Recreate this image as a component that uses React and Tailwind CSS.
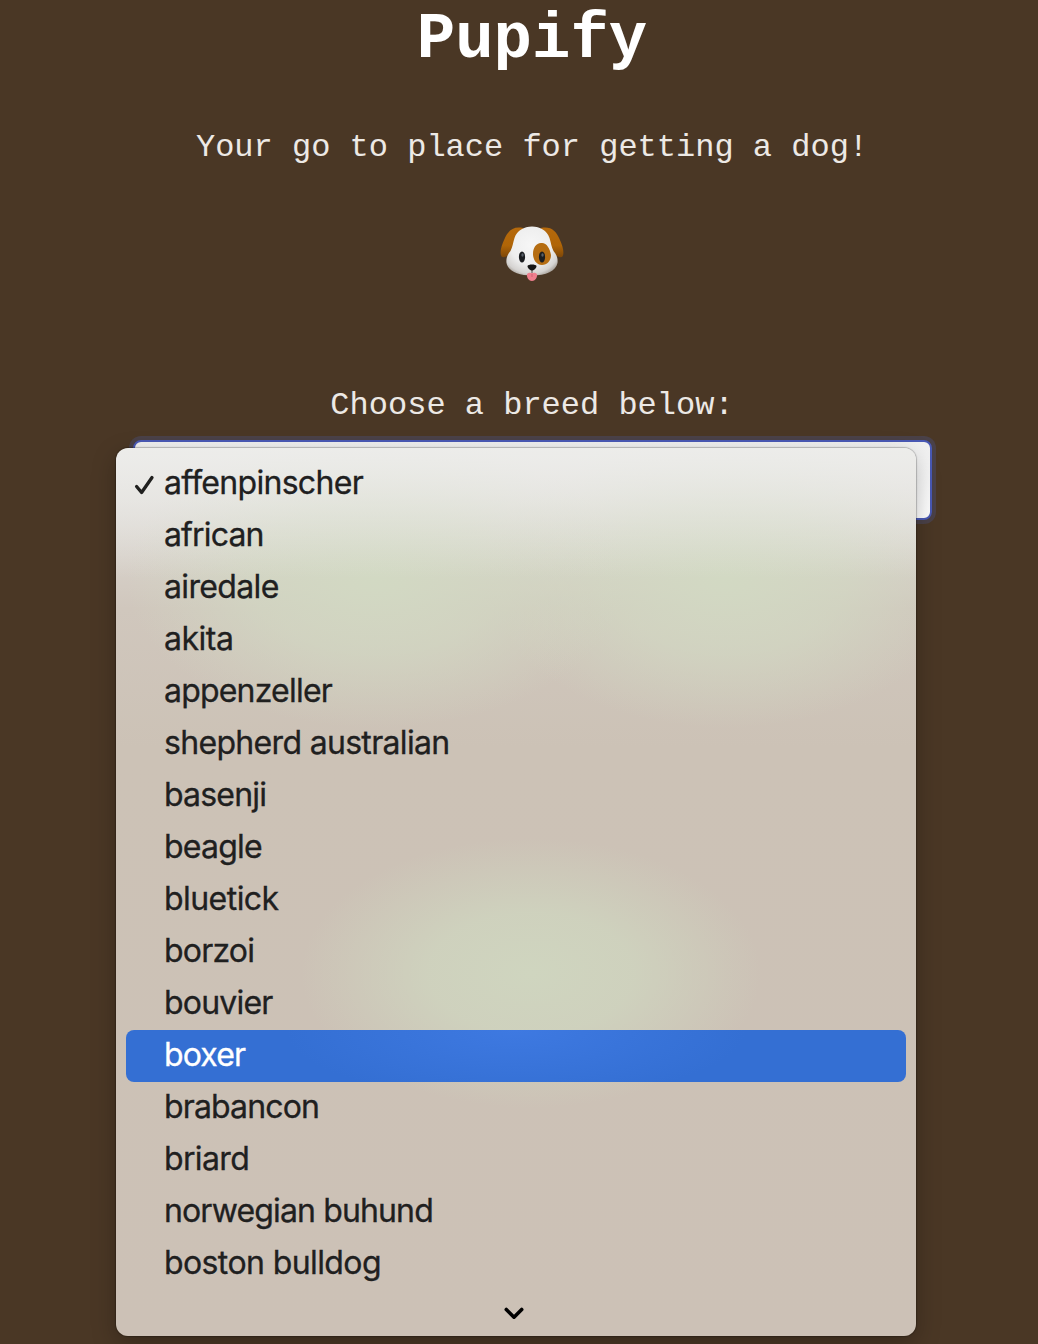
const breeds = [
  { name: 'affenpinscher', tracking: 'tracking-[-0.7px]' },
  { name: 'african', tracking: 'tracking-[-0.85px]' },
  { name: 'airedale', tracking: 'tracking-[-0.65px]' },
  { name: 'akita', tracking: 'tracking-[-0.5px]' },
  { name: 'appenzeller', tracking: 'tracking-[-0.8px]' },
  { name: 'shepherd australian', tracking: 'tracking-[-0.68px]' },
  { name: 'basenji', tracking: 'tracking-[-0.8px]' },
  { name: 'beagle', tracking: 'tracking-[-0.8px]' },
  { name: 'bluetick', tracking: 'tracking-[-0.55px]' },
  { name: 'borzoi', tracking: 'tracking-[-0.8px]' },
  { name: 'bouvier', tracking: 'tracking-[-0.8px]' },
  { name: 'boxer', tracking: 'tracking-[-0.85px]' },
  { name: 'brabancon', tracking: 'tracking-[-0.85px]' },
  { name: 'briard', tracking: 'tracking-[-0.65px]' },
  { name: 'norwegian buhund', tracking: 'tracking-[-0.87px]' },
  { name: 'boston bulldog', tracking: 'tracking-[-0.6px]' },
];

const SELECTED = 'affenpinscher';
const ACTIVE = 'boxer';

function DogFace() {
  return (
    <svg width="64" height="56" viewBox="0 0 64 56" className="block" aria-label="dog">
      <defs>
        <radialGradient id="face" cx="0.48" cy="0.38" r="0.66">
          <stop offset="0" stopColor="#f6f6f6" />
          <stop offset="0.6" stopColor="#eeeeee" />
          <stop offset="0.88" stopColor="#d5d3d1" />
          <stop offset="1" stopColor="#aaa49d" />
        </radialGradient>
        <linearGradient id="ear" x1="0" y1="0" x2="0" y2="1">
          <stop offset="0" stopColor="#b5690c" />
          <stop offset="0.6" stopColor="#b06507" />
          <stop offset="1" stopColor="#7e4708" />
        </linearGradient>
      </defs>
      <path d="M23 2C13 0 8 5 4.500 13C1 20 -0.500 27 1.500 30.500C4 33 10 29 14 23L24 10Z" fill="url(#ear)" />
      <path d="M41 2C51 0 56 5 59.500 13C63 20 64.500 27 62.500 30.500C60 33 54 29 50 23L40 10Z" fill="url(#ear)" />
      <path d="M32 0.500C24 0.500 17 4.500 14.500 12C13 17 12.500 21 10.500 25C7 29 6 33 6.500 37C8 45 18 49.500 32 49.500C46 49.500 56 45 57.500 37C58 33 57 29 53.500 25C51.500 21 51 17 49.500 12C47 4.500 40 0.500 32 0.500Z" fill="url(#face)" />
      <path d="M41 17C46 16 50 22 51 29C51 35 47 39 42 39C36 39 33 33 33 28C33 22 36 17 41 17Z" fill="#b56d12" />
      <ellipse cx="22" cy="31" rx="3.1" ry="5.500" fill="#1b1d20" />
      <ellipse cx="42" cy="31" rx="3.1" ry="5.500" fill="#1b1d20" />
      <ellipse cx="22.500" cy="29" rx="1.2" ry="1.8" fill="#596068" />
      <ellipse cx="42.500" cy="29" rx="1.2" ry="1.8" fill="#596068" />
      <path d="M32 43V47" stroke="#68605c" strokeWidth="1.2" />
      <path d="M27.500 40C28 38 36 38 36.500 40C36.500 42.500 33.500 44.500 32 44.500C30.500 44.500 27.500 42.500 27.500 40Z" fill="#151515" />
      <path d="M27 48C29 46 31 47 32 47C33 47 35 46 37 48C37.500 52 35 55 32 55C29 55 26.500 52 27 48Z" fill="#ee7e8d" />
      <path d="M32 48V51" stroke="#cf6073" strokeWidth="1" />
    </svg>
  );
}

function Option({ breed }) {
  const active = breed.name === ACTIVE;
  return (
    <li
      className={
        active
          ? 'flex h-[52px] items-center rounded-lg bg-[radial-gradient(ellipse_230px_70px_at_50%_0,#3e79e1,#346fd3)] text-white'
          : 'flex h-[52px] items-center text-[#20201f]'
      }
    >
      <span className="flex w-[38.5px] shrink-0 pl-2">
        {breed.name === SELECTED && (
          <svg width="22" height="22" viewBox="0 0 22 22" fill="none" stroke="currentColor" strokeWidth="3.3" strokeLinecap="round" strokeLinejoin="round" className="mt-0.5">
            <path d="M2.600 12.500L7.600 18.500L18 3.500" />
          </svg>
        )}
      </span>
      <span className={`pb-0.5 text-[32px] leading-[50px] whitespace-nowrap [-webkit-text-stroke:0.3px_currentColor] ${breed.tracking}`}>{breed.name}</span>
    </li>
  );
}

function BreedMenu() {
  return (
    <div className="absolute top-[6px] -left-[19px] flex h-[888px] w-[800px] flex-col overflow-hidden rounded-xl bg-[linear-gradient(#ededebf0,#ededeb99_50px,#ededeb00_130px),radial-gradient(ellipse_230px_135px_at_415px_525px,#cfd5bf,#cfd5bfcc_45%,#cfd5bf00),radial-gradient(ellipse_250px_150px_at_260px_130px,#d2d9c3,#d2d9c3aa_50%,#d2d9c300),radial-gradient(ellipse_240px_150px_at_610px_130px,#d2d9c3,#d2d9c3aa_50%,#d2d9c300),linear-gradient(#e4e2de,#dcd8d2_70px,#d0c7bd_160px,#ccc2b6_300px,#ccc1b6)] px-[10px] pt-[10px] font-['Inter',sans-serif] shadow-[0_0_1px_1px_rgba(0,0,0,0.22),0_8px_24px_rgba(0,0,0,0.25)]">
      <ul>
        {breeds.map((breed) => (
          <Option key={breed.name} breed={breed} />
        ))}
      </ul>
      <svg width="20" height="14" viewBox="0 0 20 14" fill="none" stroke="#000" strokeWidth="3.6" strokeLinecap="round" strokeLinejoin="round" className="mt-[17px] ml-[378px]">
        <path d="M2.300 2.500L10 10.200L17.700 2.500" />
      </svg>
    </div>
  );
}

export default function App() {
  return (
    <main className="flex h-[1344px] w-[1038px] flex-col items-center overflow-hidden bg-[#4a3725] pl-[26px] font-['Liberation_Mono',monospace] text-white">
      <h1 className="h-[80px] text-[64px] leading-[80px] font-bold">Pupify</h1>
      <p className="mt-12 h-10 text-[32px] leading-10 text-[#ede9e5]">Your go to place for getting a dog!</p>
      <div className="mt-[58px]">
        <DogFace />
      </div>
      <p className="mt-[104px] h-10 text-[32px] leading-10 text-[#ede9e5]">Choose a breed below:</p>
      <div className="relative mt-[14px] h-20 w-[799px] rounded-lg border-2 border-[#4959b5] bg-linear-to-b from-[#f0f0f0] to-white shadow-[0_0_0_4px_#4a4148]">
        <BreedMenu />
      </div>
    </main>
  );
}
